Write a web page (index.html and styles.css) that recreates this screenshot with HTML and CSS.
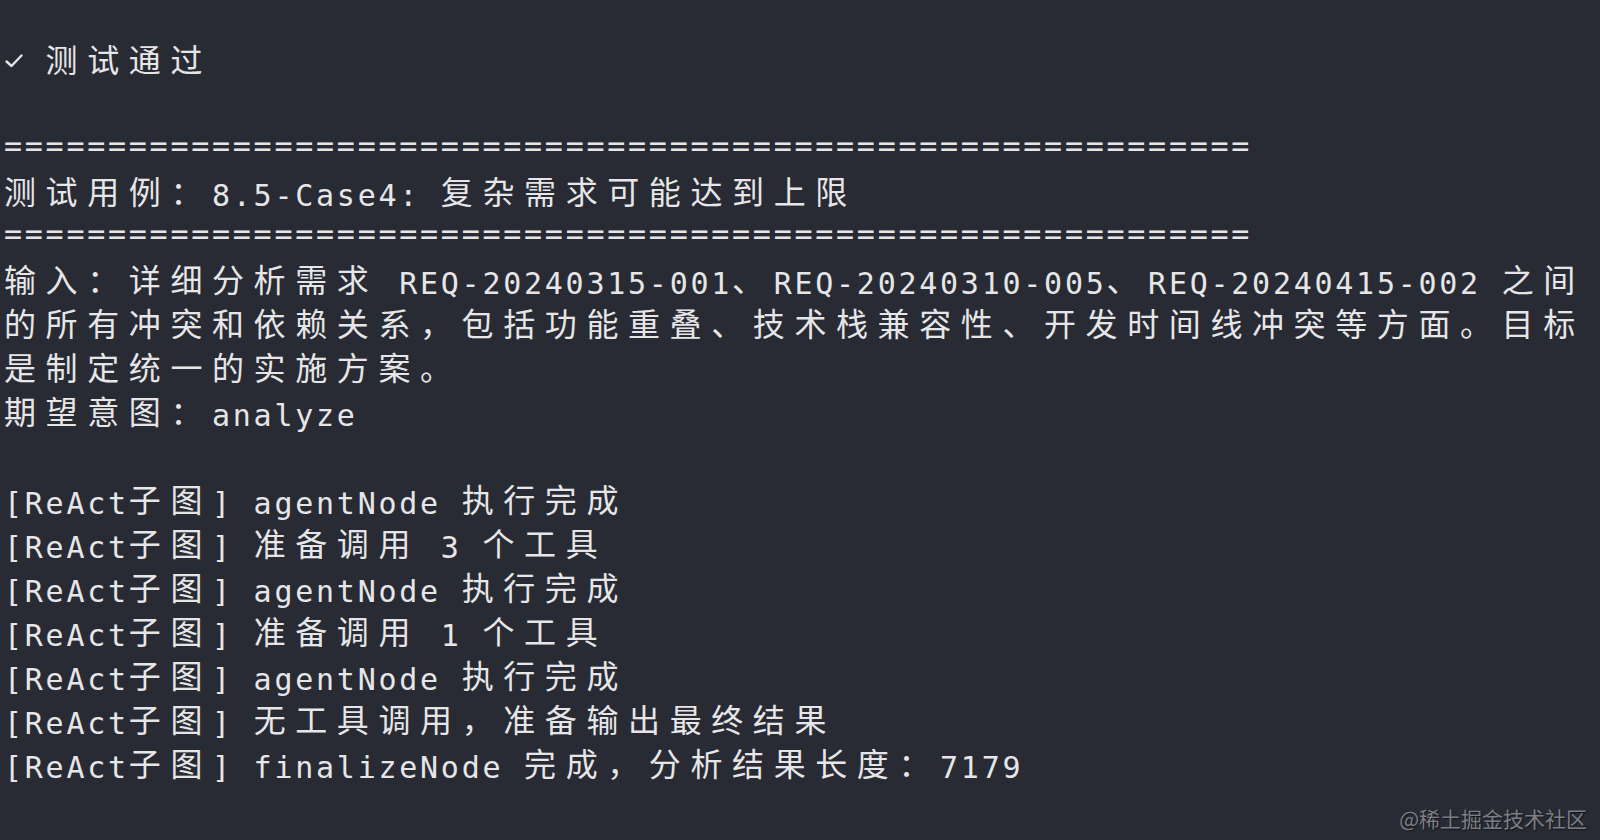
FILE: index.html
```html
<!DOCTYPE html>
<html lang="zh-CN">
<head>
<meta charset="utf-8">
<title>Terminal</title>
<link rel="stylesheet" href="styles.css">
</head>
<body>
<div class="term">
  <div class="row"><span class="ck"><svg width="18" height="14" viewBox="0 0 18 14"><polyline points="1.5,7.5 6.5,12 16.5,1.5" fill="none" stroke="#e4e4e6" stroke-width="2.4" stroke-linecap="round" stroke-linejoin="round"/></svg></span> <span class="w">测试通过</span></div>
  <div class="row"></div>
  <div class="row">============================================================</div>
  <div class="row"><span class="w">测试用例：</span>8.5-Case4: <span class="w">复杂需求可能达到上限</span></div>
  <div class="row">============================================================</div>
  <div class="row"><span class="w">输入：详细分析需求</span> REQ-20240315-001<span class="w">、</span>REQ-20240310-005<span class="w">、</span>REQ-20240415-002 <span class="w">之间</span></div>
  <div class="row"><span class="w">的所有冲突和依赖关系，包括功能重叠、技术栈兼容性、开发时间线冲突等方面。目标</span></div>
  <div class="row"><span class="w">是制定统一的实施方案。</span></div>
  <div class="row"><span class="w">期望意图：</span>analyze</div>
  <div class="row"></div>
  <div class="row">[ReAct<span class="w">子图</span>] agentNode <span class="w">执行完成</span></div>
  <div class="row">[ReAct<span class="w">子图</span>] <span class="w">准备调用</span> 3 <span class="w">个工具</span></div>
  <div class="row">[ReAct<span class="w">子图</span>] agentNode <span class="w">执行完成</span></div>
  <div class="row">[ReAct<span class="w">子图</span>] <span class="w">准备调用</span> 1 <span class="w">个工具</span></div>
  <div class="row">[ReAct<span class="w">子图</span>] agentNode <span class="w">执行完成</span></div>
  <div class="row">[ReAct<span class="w">子图</span>] <span class="w">无工具调用，准备输出最终结果</span></div>
  <div class="row">[ReAct<span class="w">子图</span>] finalizeNode <span class="w">完成，分析结果长度：</span>7179</div>
</div>
<div class="watermark">@稀土掘金技术社区</div>
</body>
</html>
```

FILE: styles.css
```css
html, body {
  margin: 0;
  padding: 0;
  width: 1600px;
  height: 840px;
  overflow: hidden;
  background: #282b33;
}

body {
  position: relative;
}

.term {
  padding: 36px 0 0 4px;
  font-family: "DejaVu Sans Mono", "Liberation Mono", monospace;
  font-size: 30px;
  letter-spacing: 2.74px;
  color: #e6e6e8;
}

.row {
  height: 44px;
  line-height: 44px;
  white-space: pre;
}

.w {
  font-family: "Noto Sans CJK SC", "Noto Sans", sans-serif;
  font-size: 32px;
  letter-spacing: 9.6px;
  vertical-align: 2px;
}

.ck {
  display: inline-block;
  width: 20.8px;
  height: 44px;
  vertical-align: top;
}

.ck svg {
  display: block;
  margin: 18px 0 0 1px;
}

.watermark {
  position: absolute;
  right: 13px;
  bottom: 8px;
  font-family: "Noto Sans CJK SC", sans-serif;
  font-size: 21px;
  line-height: 28px;
  color: #7b7e85;
  text-shadow: 1px 1px 1px #15161a;
}
```
